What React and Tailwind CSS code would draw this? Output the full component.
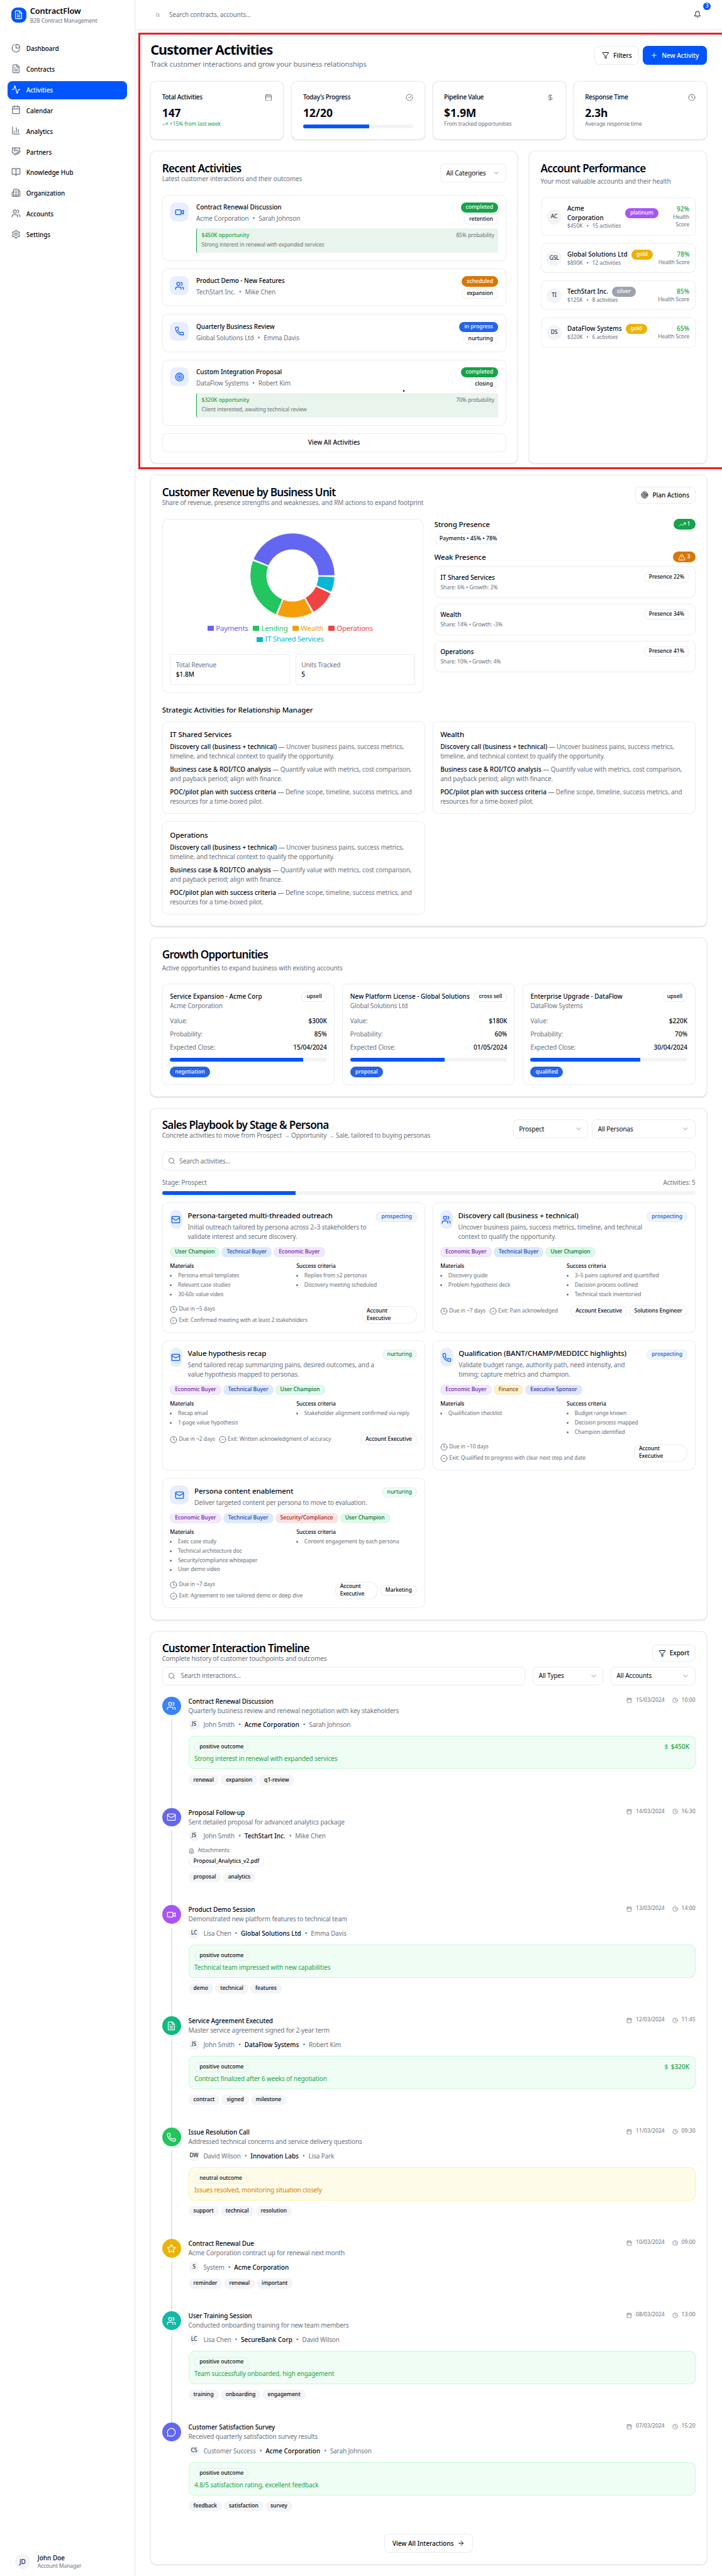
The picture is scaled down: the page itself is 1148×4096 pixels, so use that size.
import React from "react";
import {
  Activity, ArrowRight, Bell, BookOpen, Building2, Calendar, ChartColumn, ChartPie, ChevronDown,
  CircleCheck, CircleCheckBig, Clock, DollarSign, FileText, Filter, Handshake, Mail, MessageCircle,
  Phone, Plus, Search, Settings, Star, Target, TrendingUp, TriangleAlert, Users, Video,
} from "lucide-react";

const line = "ring-1 ring-inset ring-[#e5e7eb]";
const xs = "text-[11.5px] leading-[16px] tracking-[-0.14px]";
const xsb = "text-[11.5px] leading-[16px] tracking-[-0.04px] font-medium";
const sm = "text-[13.4px] leading-[20px] tracking-[-0.16px]";
const smb = "text-[13.4px] leading-[20px] tracking-[0px] font-medium";
const smh = "text-[13.4px] leading-[20px] tracking-[-0.1px] font-medium";
const base = "text-[15.4px] leading-[24px] tracking-[-0.22px]";
const baseb = "text-[15.4px] leading-[24px] tracking-[-0.13px] font-medium";
const muted = "text-[#6b7280]";

const Card = ({ className = "", children }) => (
  <section className={`rounded-[12px] bg-white p-[24.8px] shadow-sm ${line} ${className}`}>{children}</section>
);
const Title = ({ children }) => (
  <h2 className="whitespace-nowrap text-[23px] leading-[24px] font-semibold tracking-[-1.02px]">{children}</h2>
);
const Badge = ({ className = "", outline, children }) => (
  <span className={`inline-flex shrink-0 items-center rounded-full px-[10.8px] py-[2.8px] whitespace-nowrap ${xsb} ${outline ? line : ""} ${className}`}>{children}</span>
);
const Progress = ({ value, className = "" }) => (
  <div className={`h-2 w-full overflow-hidden rounded-full bg-[#f3f4f6] ${className}`}>
    <div className="h-full bg-[#0055ff]" style={{ width: `${value}%` }} />
  </div>
);
const Select = ({ className = "", children }) => (
  <div className={`flex h-10 shrink-0 items-center justify-between rounded-[10px] px-[12.8px] ${sm} ${line} ${className}`}>
    <span className="whitespace-nowrap">{children}</span>
    <ChevronDown className="size-4 opacity-50" />
  </div>
);
const Dot = () => <span>•</span>;

/* ---------- sidebar ---------- */
const nav = [
  ["Dashboard", ChartPie], ["Contracts", FileText], ["Activities", Activity], ["Calendar", Calendar],
  ["Analytics", ChartColumn], ["Partners", Handshake], ["Knowledge Hub", BookOpen],
  ["Organization", Building2], ["Accounts", Users], ["Settings", Settings],
];
const Sidebar = () => (
  <aside className="flex w-72 shrink-0 flex-col border-r border-[#e5e7eb]">
    <div className="flex h-16 items-center gap-2 px-6">
      <div className="flex size-8 items-center justify-center rounded-[12px] bg-[#0055ff] text-white"><FileText className="size-5" /></div>
      <div>
        <div className="text-[17.3px] leading-[28px] font-semibold tracking-[-0.3px]">ContractFlow</div>
        <div className={`${xs} ${muted}`}>B2B Contract Management</div>
      </div>
    </div>
    <nav className="mt-5 flex flex-col gap-1 px-4">
      {nav.map(([n, Icon]) => (
        <div key={n} className={`flex h-10 items-center gap-3 rounded-[10px] px-2 ${smh} ${n === "Activities" ? "bg-[#0055ff] text-white" : ""}`}>
          <Icon className={`mb-1 size-5 ${n === "Activities" ? "" : "text-[#6b7280]"}`} />
          {n}
        </div>
      ))}
    </nav>
    <div className="mt-auto flex items-center gap-4 px-8 pb-3">
      <div className={`flex size-8 items-center justify-center rounded-full bg-[#f3f4f6] ${sm}`}>JD</div>
      <div>
        <div className={smb}>John Doe</div>
        <div className={`${xs} ${muted}`}>Account Manager</div>
      </div>
    </div>
  </aside>
);

const TopBar = () => (
  <header className="flex h-16 items-center justify-between border-b border-[#e5e7eb] pr-8 pl-[43px]">
    <div className={`flex items-center gap-[19px] ${sm} ${muted}`}>
      <Search className="size-[10px]" />
      <span>Search contracts, accounts...</span>
    </div>
    <div className="relative flex size-10 items-center justify-center">
      <Bell className="size-4" />
      <span className={`absolute -top-1.5 -right-2 flex size-4 items-center justify-center rounded-full bg-[#0055ff] text-white ${xsb}`}>3</span>
    </div>
  </header>
);

/* ---------- overview ---------- */
const Stat = ({ label, icon: Icon, value, children }) => (
  <Card className="h-[125.6px]">
    <div className="flex items-center justify-between">
      <h3 className="text-[13.4px] leading-[20px] font-medium tracking-[-0.4px]">{label}</h3>
      <Icon className={`size-4 ${muted}`} />
    </div>
    <div className="mt-2 text-[23.5px] leading-[32px] font-bold tracking-[-0.1px]">{value}</div>
    {children}
  </Card>
);

const recent = [
  { t: "Contract Renewal Discussion", a: "Acme Corporation", p: "Sarah Johnson", s: "completed", k: "retention", c: "bg-[#16a34a]", I: Video, o: ["$450K opportunity", "85% probability", "Strong interest in renewal with expanded services"] },
  { t: "Product Demo - New Features", a: "TechStart Inc.", p: "Mike Chen", s: "scheduled", k: "expansion", c: "bg-[#d97706]", I: Users },
  { t: "Quarterly Business Review", a: "Global Solutions Ltd", p: "Emma Davis", s: "in progress", k: "nurturing", c: "bg-[#2563eb]", I: Phone },
  { t: "Custom Integration Proposal", a: "DataFlow Systems", p: "Robert Kim", s: "completed", k: "closing", c: "bg-[#16a34a]", I: Target, o: ["$320K opportunity", "70% probability", "Client interested, awaiting technical review"] },
];
const RecentItem = ({ r }) => (
  <div className={`flex gap-4 rounded-[12px] p-[16.8px] ${line} ${r.o ? "h-[140.9px]" : "h-[80.9px]"}`}>
    <div className="flex size-10 shrink-0 items-center justify-center rounded-[12px] bg-[#e6eeff] text-[#0055ff]"><r.I className="size-5" /></div>
    <div className="min-w-0 flex-1">
      <div className="flex justify-between">
        <div>
          <h4 className={smh}>{r.t}</h4>
          <p className={`mt-1 flex gap-2 ${sm} ${muted}`}><span>{r.a}</span><Dot /><span>{r.p}</span></p>
        </div>
        <div className="flex flex-col items-end gap-1">
          <Badge className={`text-white ${r.c}`}>{r.s}</Badge>
          <Badge outline>{r.k}</Badge>
        </div>
      </div>
      {r.o && (
        <div className="mt-2 rounded-[4px] border-l-2 border-[#16a34a] bg-[#e8f4ec] p-2 pl-[10px]">
          <div className="flex justify-between">
            <span className={`${xsb} text-[#16a34a]`}>{r.o[0]}</span>
            <span className={`${xs} ${muted}`}>{r.o[1]}</span>
          </div>
          <p className={`mt-1 ${xs} ${muted}`}>{r.o[2]}</p>
        </div>
      )}
    </div>
  </div>
);

const accounts = [
  { i: "AC", n: "Acme Corporation", tier: "platinum", c: "bg-[#a855f7]", v: "$450K", a: "15 activities", h: "92%", wrap: true },
  { i: "GSL", n: "Global Solutions Ltd", tier: "gold", c: "bg-[#eab308]", v: "$890K", a: "12 activities", h: "78%" },
  { i: "TI", n: "TechStart Inc.", tier: "silver", c: "bg-[#9ca3af]", v: "$125K", a: "8 activities", h: "85%" },
  { i: "DS", n: "DataFlow Systems", tier: "gold", c: "bg-[#eab308]", v: "$320K", a: "6 activities", h: "65%" },
];
const AccountItem = ({ a }) => (
  <div className={`flex items-center gap-3 rounded-[12px] p-[12.8px] ${line}`}>
    <div className={`flex size-8 shrink-0 items-center justify-center rounded-full bg-[#f3f4f6] ${xs}`}>{a.i}</div>
    <div className="flex-1">
      <div className="flex items-center gap-2">
        {a.wrap ? <span className={`w-[115px] ${smb}`}>Acme<br />Corporation</span> : <span className={`whitespace-nowrap ${smb}`}>{a.n}</span>}
        <Badge className={`text-white ${a.c}`}>{a.tier}</Badge>
      </div>
      <p className={`flex gap-2 whitespace-nowrap ${xs} ${muted}`}><span>{a.v}</span><Dot /><span>{a.a}</span></p>
    </div>
    <div className={`text-right ${a.wrap ? "w-[44px]" : "whitespace-nowrap"}`}>
      <div className={`${smb} text-[#16a34a]`}>{a.h}</div>
      <div className={`${xs} ${muted}`}>Health Score</div>
    </div>
  </div>
);

const Overview = () => (
  <>
    <div className="flex h-[60px] items-center justify-between">
      <div>
        <h1 className="text-[28.8px] leading-[36px] font-bold tracking-[-1.12px]">Customer Activities</h1>
        <p className={`${base} ${muted}`}>Track customer interactions and grow your business relationships</p>
      </div>
      <div className="flex gap-2">
        <button className={`flex h-10 w-24 items-center gap-2 rounded-[10px] pl-[16.8px] whitespace-nowrap ${smb} ${line}`}><Filter className="size-4" />Filters</button>
        <button className={`flex h-10 w-[136px] items-center gap-2 rounded-[10px] bg-[#0055ff] pl-4 whitespace-nowrap text-white ${smb}`}><Plus className="size-4" />New Activity</button>
      </div>
    </div>
    <div className="grid grid-cols-4 gap-4">
      <Stat label="Total Activities" icon={Calendar} value="147">
        <p className={`flex items-center gap-1 text-[#16a34a] ${xs}`}><TrendingUp className="size-3" />+15% from last week</p>
      </Stat>
      <Stat label="Today's Progress" icon={CircleCheckBig} value="12/20"><Progress value={60} className="mt-2" /></Stat>
      <Stat label="Pipeline Value" icon={DollarSign} value="$1.9M"><p className={`${xs} ${muted}`}>From tracked opportunities</p></Stat>
      <Stat label="Response Time" icon={Clock} value="2.3h"><p className={`${xs} ${muted}`}>Average response time</p></Stat>
    </div>
    <div className="grid h-[665px] grid-cols-3 gap-6">
      <Card className="col-span-2">
        <div className="flex items-center justify-between">
          <div>
            <Title>Recent Activities</Title>
            <p className={`${sm} ${muted}`}>Latest customer interactions and their outcomes</p>
          </div>
          <Select className="w-[140px]">All Categories</Select>
        </div>
        <div className="mt-6 flex flex-col gap-4">
          {recent.map((r) => <RecentItem key={r.t} r={r} />)}
          <button className={`h-10 rounded-[10px] ${smb} ${line}`}>View All Activities</button>
        </div>
      </Card>
      <Card>
        <Title>Account Performance</Title>
        <p className={`mt-1.5 ${sm} ${muted}`}>Your most valuable accounts and their health</p>
        <div className="mt-6 flex flex-col gap-4">{accounts.map((a) => <AccountItem key={a.i} a={a} />)}</div>
      </Card>
    </div>
  </>
);

/* ---------- revenue ---------- */
const slices = [
  ["Payments", "#6366f1", 0, 157.5], ["Lending", "#22c55e", 159.5, 247], ["Wealth", "#f59e0b", 249, 298],
  ["Operations", "#ef4444", 300, 335], ["IT Shared Services", "#06b6d4", 337, 358],
];
const pt = (r, deg) => `${(r * Math.cos((deg * Math.PI) / 180)).toFixed(2)} ${(-r * Math.sin((deg * Math.PI) / 180)).toFixed(2)}`;
const Donut = () => (
  <svg viewBox="-91 -91 182 182" className="mx-auto mt-[13px] size-[182px]">
    {slices.map(([n, c, a, b]) => (
      <path key={n} fill={c} stroke="#fff" d={`M${pt(90, a)}A90 90 0 0 0 ${pt(90, b)}L${pt(55, b)}A55 55 0 0 1 ${pt(55, a)}Z`} />
    ))}
  </svg>
);
const weak = [["IT Shared Services", "22%", "6%", "2%"], ["Wealth", "34%", "14%", "-3%"], ["Operations", "41%", "10%", "4%"]];
const strategy = [
  ["Discovery call (business + technical)", "Uncover business pains, success metrics,", "timeline, and technical context to qualify the opportunity."],
  ["Business case & ROI/TCO analysis", "Quantify value with metrics, cost comparison,", "and payback period; align with finance."],
  ["POC/pilot plan with success criteria", "Define scope, timeline, success metrics, and", "resources for a time-boxed pilot."],
];
const Legend = ({ items }) => (
  <div className="flex justify-center whitespace-nowrap text-[15.4px] leading-[24px] tracking-[-0.35px]">
    {items.map(([n, c]) => (
      <span key={n} className="mr-[10px] flex items-center" style={{ color: c }}>
        <span className="mt-0.5 mr-1 h-[11px] w-[14px]" style={{ background: c }} />{n}
      </span>
    ))}
  </div>
);
const Revenue = () => (
  <Card className="min-h-[960px]">
    <div className="flex items-start justify-between">
      <div>
        <Title>Customer Revenue by Business Unit</Title>
        <p className={`${sm} ${muted}`}>Share of revenue, presence strengths and weaknesses, and RM actions to expand footprint</p>
      </div>
      <button className={`flex h-9 w-[128px] items-center gap-2 rounded-[10px] pl-[12.8px] whitespace-nowrap ${smb} ${line}`}><Target className="size-4" />Plan Actions</button>
    </div>
    <div className="mt-6 grid grid-cols-2 gap-6">
      <div className={`rounded-[12px] p-[16.8px] ${line}`}>
        <div className="flex h-64 flex-col">
          <Donut />
          <div className="mt-[9px]">
            <Legend items={slices.slice(0, 4)} />
            <Legend items={slices.slice(4)} />
          </div>
        </div>
        <div className="mt-4 grid grid-cols-2 gap-3">
          {[["Total Revenue", "$1.8M"], ["Units Tracked", "5"]].map(([k, v]) => (
            <div key={k} className={`rounded-[5px] p-[12.8px] ${line}`}>
              <div className={`${sm} ${muted}`}>{k}</div>
              <div className={smb}>{v}</div>
            </div>
          ))}
        </div>
      </div>
      <div>
        <div className="flex items-center justify-between">
          <h3 className={baseb}>Strong Presence</h3>
          <Badge className="gap-[2px] bg-[#16a34a] text-white"><TrendingUp className="size-4" />1</Badge>
        </div>
        <div className="mt-2 flex"><Badge outline className="tracking-[0.1px]!">Payments • 45% • 78%</Badge></div>
        <div className="mt-4 flex items-center justify-between">
          <h3 className={baseb}>Weak Presence</h3>
          <Badge className="gap-[3px] bg-[#d97706] text-white"><TriangleAlert className="size-4" />3</Badge>
        </div>
        <div className="mt-2 flex flex-col gap-3">
          {weak.map(([n, p, s, g]) => (
            <div key={n} className={`rounded-[12px] p-[12.8px] ${line}`}>
              <div className="flex items-center justify-between"><span className={smb}>{n}</span><Badge outline>Presence {p}</Badge></div>
              <p className={`mt-1 ${xs} ${muted}`}>Share: {s} • Growth: {g}</p>
            </div>
          ))}
        </div>
      </div>
    </div>
    <h3 className={`mt-6 ${baseb}`}>Strategic Activities for Relationship Manager</h3>
    <div className="mt-3 grid grid-cols-2 gap-4">
      {["IT Shared Services", "Wealth", "Operations"].map((n) => (
        <div key={n} className={`rounded-[12px] p-[16.8px] ${line}`}>
          <h4 className={`mb-1 ${baseb}`}>{n}</h4>
          <div className="flex flex-col gap-2 whitespace-nowrap">
            {strategy.map(([b, x, y]) => (
              <p key={b} className={`${sm} ${muted}`}><span className="font-medium tracking-[0.02px] text-[#030712]">{b}</span> — {x}<br />{y}</p>
            ))}
          </div>
        </div>
      ))}
    </div>
  </Card>
);

/* ---------- growth ---------- */
const growth = [
  ["Service Expansion - Acme Corp", "upsell", "Acme Corporation", "$300K", 85, "15/04/2024", "negotiation"],
  ["New Platform License - Global Solutions", "cross sell", "Global Solutions Ltd", "$180K", 60, "01/05/2024", "proposal"],
  ["Enterprise Upgrade - DataFlow", "upsell", "DataFlow Systems", "$220K", 70, "30/04/2024", "qualified"],
];
const Growth = () => (
  <Card className="min-h-[338.9px]">
    <Title>Growth Opportunities</Title>
    <p className={`mt-1.5 ${sm} ${muted}`}>Active opportunities to expand business with existing accounts</p>
    <div className="mt-6 grid grid-cols-3 gap-4">
      {growth.map(([t, k, a, v, p, d, s]) => (
        <div key={t} className={`rounded-[12px] p-[16.8px] ${line}`}>
          <div className="flex h-10 items-start justify-between">
            <div className="whitespace-nowrap"><h4 className={smb}>{t}</h4><p className={`${sm} ${muted}`}>{a}</p></div>
            <Badge outline>{k}</Badge>
          </div>
          <div className="mt-3 flex flex-col gap-2">
            {[["Value:", v], ["Probability:", `${p}%`], ["Expected Close:", d]].map(([l, x]) => (
              <div key={l} className="flex justify-between"><span className={`${sm} ${muted}`}>{l}</span><span className={smb}>{x}</span></div>
            ))}
          </div>
          <Progress value={p} className="my-3" />
          <div className="flex"><Badge className="bg-[#2563eb] text-white">{s}</Badge></div>
        </div>
      ))}
    </div>
  </Card>
);

/* ---------- playbook ---------- */
const tones = {
  "User Champion": "bg-[#dcfce7] text-[#166534]",
  "Technical Buyer": "bg-[#dbeafe] text-[#1e40af]",
  "Economic Buyer": "bg-[#f3e8ff] text-[#6b21a8]",
  "Finance": "bg-[#fef3c7] text-[#92400e]",
  "Executive Sponsor": "bg-[#e0e7ff] text-[#3730a3]",
  "Security/Compliance": "bg-[#fee2e2] text-[#991b1b]",
};
const plays = [
  { t: "Persona-targeted multi-threaded outreach", I: Mail, w: "w-[26px]", d: ["Initial outreach tailored by persona across 2–3 stakeholders to", "validate interest and secure discovery."], s: "prospecting", p: ["User Champion", "Technical Buyer", "Economic Buyer"], m: ["Persona email templates", "Relevant case studies", "30-60s value video"], c: ["Replies from ≥2 personas", "Discovery meeting scheduled"], due: "~5 days", exit: "Confirmed meeting with at least 2 stakeholders", stack: true, o: [["Account Executive", "w-[118px]"]] },
  { t: "Discovery call (business + technical)", I: Users, w: "w-[26px]", d: ["Uncover business pains, success metrics, timeline, and technical", "context to qualify the opportunity."], s: "prospecting", p: ["Economic Buyer", "Technical Buyer", "User Champion"], m: ["Discovery guide", "Problem hypothesis deck"], c: ["3–5 pains captured and quantified", "Decision process outlined", "Technical stack inventoried"], due: "~7 days", exit: "Pain acknowledged", top: true, o: [["Account Executive"], ["Solutions Engineer"]] },
  { t: "Value hypothesis recap", I: Mail, w: "w-[26px]", d: ["Send tailored recap summarizing pains, desired outcomes, and a", "value hypothesis mapped to personas."], s: "nurturing", p: ["Economic Buyer", "Technical Buyer", "User Champion"], m: ["Recap email", "1-page value hypothesis"], c: ["Stakeholder alignment confirmed via reply"], due: "~2 days", exit: "Written acknowledgment of accuracy", o: [["Account Executive"]] },
  { t: "Qualification (BANT/CHAMP/MEDDICC highlights)", I: Phone, w: "w-[27px]", d: ["Validate budget range, authority path, need intensity, and", "timing; capture metrics and champion."], s: "prospecting", p: ["Economic Buyer", "Finance", "Executive Sponsor"], m: ["Qualification checklist"], c: ["Budget range known", "Decision process mapped", "Champion identified"], due: "~10 days", exit: "Qualified to progress with clear next step and date", stack: true, o: [["Account Executive", "w-[114px]"]] },
  { t: "Persona content enablement", I: Mail, w: "w-10", d: ["Deliver targeted content per persona to move to evaluation."], s: "nurturing", p: ["Economic Buyer", "Technical Buyer", "Security/Compliance", "User Champion"], m: ["Exec case study", "Technical architecture doc", "Security/compliance whitepaper", "User demo video"], c: ["Content engagement by each persona"], due: "~7 days", exit: "Agreement to see tailored demo or deep dive", stack: true, o: [["Account Executive", "w-[92px]"], ["Marketing"]] },
];
const Bullets = ({ title, items }) => (
  <div>
    <div className={xsb}>{title}</div>
    <ul className={`mt-1 flex flex-col gap-1 whitespace-nowrap ${xs} ${muted}`}>
      {items.map((x) => <li key={x} className="flex items-center"><span className="mr-[13px] size-1 rounded-full bg-[#6b7280]" />{x}</li>)}
    </ul>
  </div>
);
const Play = ({ p }) => (
  <div className={`rounded-[12px] p-[16.8px] ${line}`}>
    <div className="flex">
      <div className={`flex h-10 shrink-0 items-center justify-center rounded-[12px] bg-[#e6eeff] text-[#0055ff] ${p.w}`}><p.I className="size-5 shrink-0" /></div>
      <div className="ml-3 min-w-0 flex-1 whitespace-nowrap">
        <h4 className={baseb}>{p.t}</h4>
        <p className={`mt-0.5 ${sm} ${muted}`}>{p.d[0]}{p.d[1] && <br />}{p.d[1]}</p>
      </div>
      <div><Badge outline className={p.s === "nurturing" ? "bg-[#ecfdf5] text-[#047857]" : "bg-[#eff6ff] text-[#1d4ed8]"}>{p.s}</Badge></div>
    </div>
    <div className="mt-3 flex gap-1">{p.p.map((x) => <Badge key={x} outline className={tones[x]}>{x}</Badge>)}</div>
    <div className="mt-3 grid grid-cols-2 gap-3">
      <Bullets title="Materials" items={p.m} />
      <Bullets title="Success criteria" items={p.c} />
    </div>
    <div className="mt-4 flex items-center justify-between">
      <div className={`flex gap-2 whitespace-nowrap ${xs} ${muted} ${p.stack ? "flex-col" : ""}`}>
        <span className="flex items-center gap-[3px]"><Clock className="size-4" />Due in {p.due}</span>
        <span className="flex items-center gap-[3px]"><CircleCheck className="size-4" />Exit: {p.exit}</span>
      </div>
      <div className="flex items-center gap-[4.5px]">
        {p.o.map(([n, w]) => w
          ? <Badge key={n} outline className={`whitespace-normal! ${w}`}>{n.split(" ")[0]}<br />{n.split(" ")[1]}</Badge>
          : <Badge key={n} outline>{n}</Badge>)}
      </div>
    </div>
  </div>
);
const Playbook = () => (
  <Card className="min-h-[1089.3px]">
    <div className="flex h-11 items-start justify-between">
      <div>
        <Title>Sales Playbook by Stage &amp; Persona</Title>
        <p className={`${sm} ${muted}`}>Concrete activities to move from Prospect → Opportunity → Sale, tailored to buying personas</p>
      </div>
      <div className="flex gap-2"><Select className="w-40">Prospect</Select><Select className="w-[220px]">All Personas</Select></div>
    </div>
    <div className={`mt-6 flex h-10 items-center gap-[9px] rounded-[10px] pl-3 ${sm} ${muted} ${line}`}><Search className="size-4" />Search activities...</div>
    <div className={`mt-4 flex justify-between ${sm} ${muted}`}><span>Stage: Prospect</span><span>Activities: 5</span></div>
    <Progress value={25} className="mt-2" />
    <div className="mt-4 grid grid-cols-2 gap-4">{plays.map((p) => <Play key={p.t} p={p} />)}</div>
  </Card>
);

/* ---------- timeline ---------- */
const good = { l: "positive outcome", box: "bg-[#f0fdf4] ring-[#bbf7d0]", c: "text-[#16a34a]" };
const neutral = { l: "neutral outcome", box: "bg-[#fefce8] ring-[#fef08a]", c: "text-[#d97706]" };
const events = [
  { t: "Contract Renewal Discussion", d: "Quarterly business review and renewal negotiation with key stakeholders", i: "JS", n: "John Smith", a: "Acme Corporation", w: "Sarah Johnson", day: "15/03/2024", h: "10:00", I: Users, bg: "bg-[#3b82f6]", k: good, o: "Strong interest in renewal with expanded services", v: "$450K", tags: ["renewal", "expansion", "q1-review"] },
  { t: "Proposal Follow-up", d: "Sent detailed proposal for advanced analytics package", i: "JS", n: "John Smith", a: "TechStart Inc.", w: "Mike Chen", day: "14/03/2024", h: "16:30", I: Mail, bg: "bg-[#6366f1]", file: "Proposal_Analytics_v2.pdf", tags: ["proposal", "analytics"] },
  { t: "Product Demo Session", d: "Demonstrated new platform features to technical team", i: "LC", n: "Lisa Chen", a: "Global Solutions Ltd", w: "Emma Davis", day: "13/03/2024", h: "14:00", I: Video, bg: "bg-[#a855f7]", k: good, o: "Technical team impressed with new capabilities", tags: ["demo", "technical", "features"] },
  { t: "Service Agreement Executed", d: "Master service agreement signed for 2-year term", i: "JS", n: "John Smith", a: "DataFlow Systems", w: "Robert Kim", day: "12/03/2024", h: "11:45", I: FileText, bg: "bg-[#10b981]", k: good, o: "Contract finalized after 6 weeks of negotiation", v: "$320K", tags: ["contract", "signed", "milestone"] },
  { t: "Issue Resolution Call", d: "Addressed technical concerns and service delivery questions", i: "DW", n: "David Wilson", a: "Innovation Labs", w: "Lisa Park", day: "11/03/2024", h: "09:30", I: Phone, bg: "bg-[#22c55e]", k: neutral, o: "Issues resolved, monitoring situation closely", tags: ["support", "technical", "resolution"] },
  { t: "Contract Renewal Due", d: "Acme Corporation contract up for renewal next month", i: "S", n: "System", a: "Acme Corporation", day: "10/03/2024", h: "09:00", I: Star, bg: "bg-[#eab308]", tags: ["reminder", "renewal", "important"] },
  { t: "User Training Session", d: "Conducted onboarding training for new team members", i: "LC", n: "Lisa Chen", a: "SecureBank Corp", w: "David Wilson", day: "08/03/2024", h: "13:00", I: Users, bg: "bg-[#14b8a6]", k: good, o: "Team successfully onboarded, high engagement", tags: ["training", "onboarding", "engagement"] },
  { t: "Customer Satisfaction Survey", d: "Received quarterly satisfaction survey results", i: "CS", n: "Customer Success", a: "Acme Corporation", w: "Sarah Johnson", day: "07/03/2024", h: "15:20", I: MessageCircle, bg: "bg-[#6366f1]", k: good, o: "4.8/5 satisfaction rating, excellent feedback", tags: ["feedback", "satisfaction", "survey"] },
];
const Event = ({ e, last }) => (
  <div className="flex gap-4">
    <div className="flex w-10 shrink-0 flex-col">
      <div className={`flex size-10 items-center justify-center rounded-full text-white ${e.bg}`}><e.I className="size-5" /></div>
      {!last && <div className="mt-2 ml-[19.8px] w-[2.7px] flex-1 bg-[#e5e7eb]" />}
    </div>
    <div className="flex-1 pb-[48.2px]">
      <div className="flex items-start justify-between">
        <div><h4 className={smh}>{e.t}</h4><p className={`${sm} ${muted}`}>{e.d}</p></div>
        <div className={`flex items-center gap-2 ${xs} ${muted}`}>
          <Calendar className="size-3" /><span className="tracking-[0px]">{e.day}</span><Clock className="ml-2 size-3" /><span className="tracking-[0px]">{e.h}</span>
        </div>
      </div>
      <div className={`mt-2 flex items-center gap-2 ${sm} ${muted}`}>
        <span className={`flex size-6 items-center justify-center rounded-full bg-[#f3f4f6] text-[#030712] ${xs}`}>{e.i}</span>
        <span>{e.n}</span><Dot /><span className={`${smb} text-[#030712]`}>{e.a}</span>
        {e.w && <><Dot /><span>{e.w}</span></>}
      </div>
      {e.k && (
        <div className={`mt-3 rounded-[12px] p-[12.8px] ring-1 ring-inset ${e.k.box}`}>
          <div className="flex items-center justify-between">
            <Badge outline>{e.k.l}</Badge>
            {e.v && <span className={`flex items-center gap-1 text-[#16a34a] ${smb}`}><DollarSign className="size-3" />{e.v}</span>}
          </div>
          <p className={`mt-1 ${sm} ${e.k.c}`}>{e.o}</p>
        </div>
      )}
      {e.file && (
        <div className="mt-3">
          <div className={`flex items-center gap-2 ${xs} ${muted}`}><FileText className="size-3" />Attachments:</div>
          <div className="mt-1 flex"><Badge outline>{e.file}</Badge></div>
        </div>
      )}
      <div className="mt-3 flex gap-1">{e.tags.map((t) => <Badge key={t} className="bg-[#f3f4f6]">{t}</Badge>)}</div>
    </div>
  </div>
);
const Timeline = () => (
  <Card className="min-h-[1985.3px]">
    <div className="flex items-center justify-between">
      <div>
        <Title>Customer Interaction Timeline</Title>
        <p className={`${sm} ${muted}`}>Complete history of customer touchpoints and outcomes</p>
      </div>
      <button className={`flex h-9 w-[91.5px] items-center gap-2 rounded-[10px] pl-[12.8px] ${smb} ${line}`}><Filter className="size-4" />Export</button>
    </div>
    <div className="mt-1.5 flex gap-4">
      <div className={`flex h-10 flex-1 items-center gap-3 rounded-[10px] pl-3 ${sm} ${muted} ${line}`}><Search className="size-4" />Search interactions...</div>
      <Select className="w-[150px]">All Types</Select>
      <Select className="w-[180px]">All Accounts</Select>
    </div>
    <div className="mt-6">{events.map((e, i) => <Event key={e.t} e={e} last={i === events.length - 1} />)}</div>
    <div className="flex justify-center">
      <button className={`flex h-10 w-[188px] items-center justify-center gap-2 rounded-[10px] ${smb} ${line}`}>View All Interactions<ArrowRight className="size-4" /></button>
    </div>
  </Card>
);

export default function App() {
  return (
    <div className="relative flex h-[5480px] w-[1536px] overflow-hidden bg-white font-['Noto_Sans',sans-serif] text-[#030712] [zoom:0.74739]">
      <Sidebar />
      <div className="flex min-w-0 flex-1 flex-col">
        <TopBar />
        <main className="flex flex-col gap-6 px-8 py-6">
          <Overview />
          <Revenue />
          <Growth />
          <Playbook />
          <Timeline />
        </main>
      </div>
      <div className="pointer-events-none absolute top-[69px] right-0 left-[295px] h-[929.5px] border-[5px] border-r-0 border-[#ee1c24]" />
      <div className="absolute top-[830px] left-[857px] h-[4px] w-[3px] rounded-full bg-black" />
    </div>
  );
}
